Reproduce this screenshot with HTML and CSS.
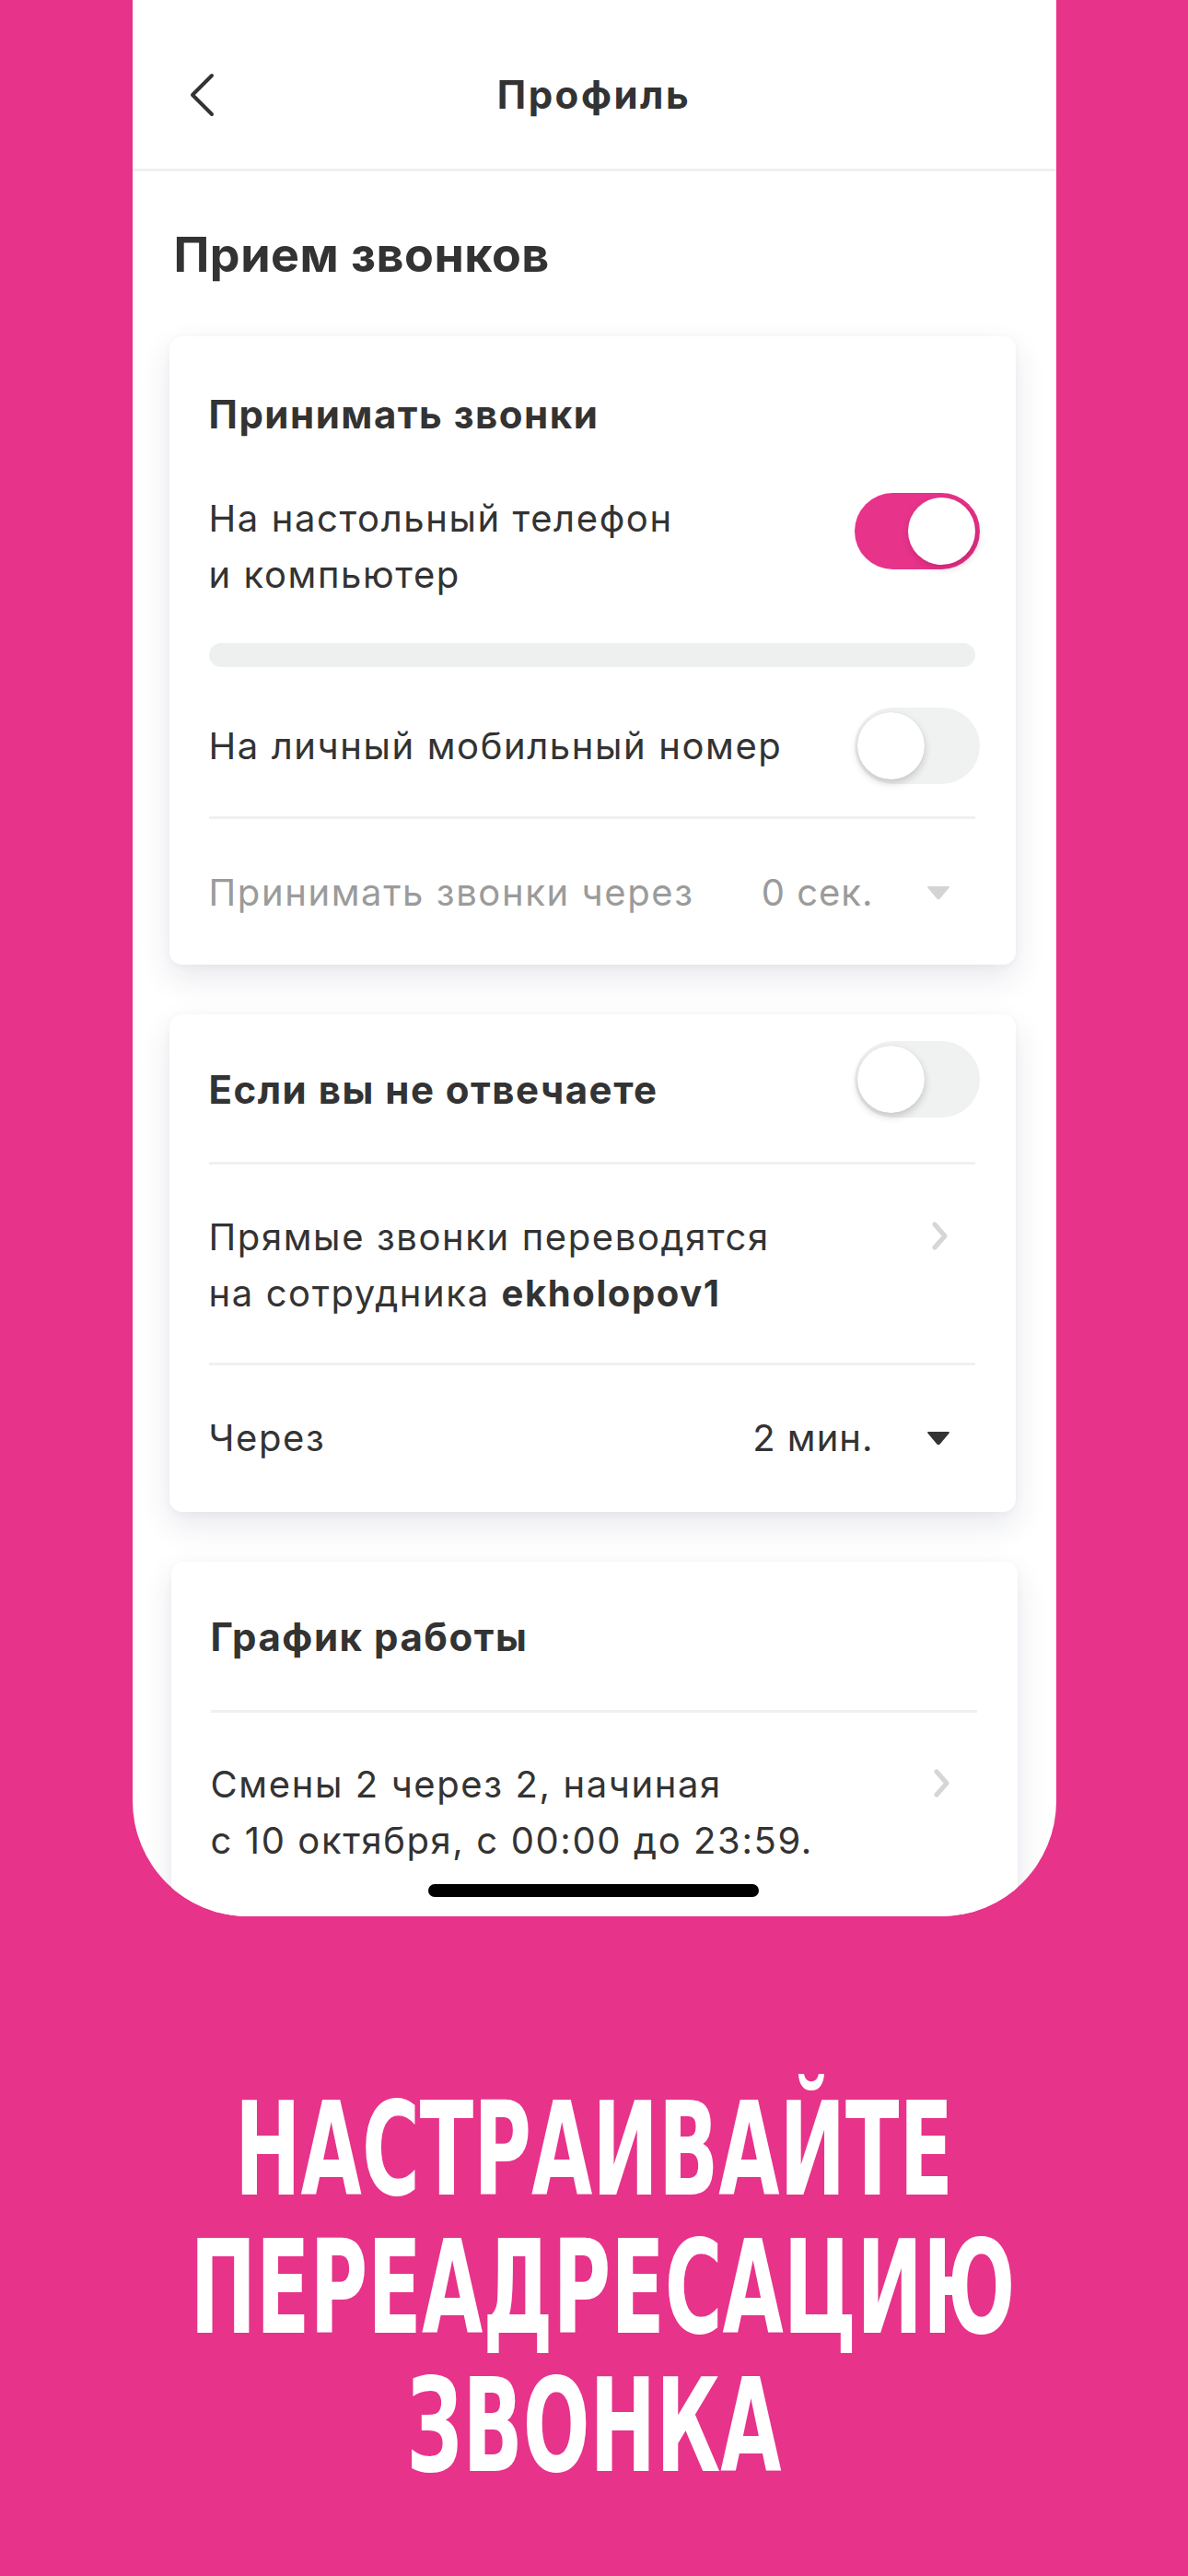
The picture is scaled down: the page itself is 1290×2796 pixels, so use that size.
FILE: index.html
```html
<!DOCTYPE html>
<html lang="ru">
<head>
    <meta charset="UTF-8">
    <meta name="viewport" content="width=device-width, initial-scale=1.0">
    <title>Профиль</title>
    <link rel="stylesheet" href="styles.css">
</head>
<body>
    <div class="screen">
        <!-- barra in alto -->
        <header class="topbar">
            <span class="back">
                <svg width="30" height="48" viewBox="0 0 30 48"><path d="M25 3 L4 24 L25 45" fill="none" stroke="#333" stroke-width="4" stroke-linecap="round" stroke-linejoin="round"/></svg>
            </span>
            <div class="topbar-title">Профиль</div>
            <span></span>
        </header>

        <main class="content">
            <h1 class="section-title">Прием звонков</h1>

            <section class="card">
                <div class="card-title">Принимать звонки</div>
                <div class="row row-top">
                    <div class="text">На настольный телефон<br>и компьютер</div>
                    <div class="toggle on"><span class="knob"></span></div>
                </div>
                <div class="bar"></div>
                <div class="row row-mobile">
                    <div class="text">На личный мобильный номер</div>
                    <div class="toggle"><span class="knob"></span></div>
                </div>
                <div class="divider divider-mobile"></div>
                <div class="row row-select row-delay disabled">
                    <div class="text">Принимать звонки через</div>
                    <div class="select">
                        <span class="value">0 сек.</span>
                        <svg class="caret" width="26" height="16" viewBox="0 0 26 16"><path d="M2.5 1 H23.5 Q26 1 24.3 3 L14.6 14.4 Q13 16 11.4 14.4 L1.7 3 Q0 1 2.5 1 Z" fill="#d4d4d4"/></svg>
                    </div>
                </div>
            </section>

            <section class="card">
                <div class="row row-noanswer">
                    <div class="card-title">Если вы не отвечаете</div>
                    <div class="toggle"><span class="knob"></span></div>
                </div>
                <div class="divider"></div>
                <div class="row row-link row-forward">
                    <div class="text">Прямые звонки переводятся<br>на сотрудника <b>ekholopov1</b></div>
                    <svg class="chevron" width="17" height="31" viewBox="0 0 17 31"><path d="M3 3 L14 15.5 L3 28" fill="none" stroke="#d6d6d6" stroke-width="5" stroke-linecap="round" stroke-linejoin="round"/></svg>
                </div>
                <div class="divider"></div>
                <div class="row row-select row-after">
                    <div class="text">Через</div>
                    <div class="select">
                        <span class="value">2 мин.</span>
                        <svg class="caret" width="26" height="16" viewBox="0 0 26 16"><path d="M2.5 1 H23.5 Q26 1 24.3 3 L14.6 14.4 Q13 16 11.4 14.4 L1.7 3 Q0 1 2.5 1 Z" fill="#333"/></svg>
                    </div>
                </div>
            </section>

            <section class="card card-schedule">
                <div class="card-title">График работы</div>
                <div class="divider divider-schedule"></div>
                <div class="row row-link row-schedule">
                    <div class="text">Смены 2 через 2, начиная<br>с 10 октября, с 00:00 до 23:59.</div>
                    <svg class="chevron" width="17" height="31" viewBox="0 0 17 31"><path d="M3 3 L14 15.5 L3 28" fill="none" stroke="#d6d6d6" stroke-width="5" stroke-linecap="round" stroke-linejoin="round"/></svg>
                </div>
            </section>
        </main>

        <div class="home-indicator"></div>
    </div>

    <div class="promo">
        <div class="promo-line">НАСТРАИВАЙТЕ</div>
        <div class="promo-line">ПЕРЕАДРЕСАЦИЮ</div>
        <div class="promo-line">ЗВОНКА</div>
    </div>
</body>
</html>
```

FILE: styles.css
```css
*{
    box-sizing: border-box;
}
body{
    margin: 0;
    background-color: #e7338a;
    font-family: Inter, "Noto Sans", sans-serif;
    color: #333;
}

.screen{
    position: relative;
    width: 1003px;
    height: 2080px;
    margin: 0 auto;
    background-color: white;
    border-radius: 0 0 125px 125px;
    overflow: hidden;
}

/* barra in alto */
.topbar{
    height: 186px;
    padding: 23px 61px 0 61px;
    border-bottom: 3px solid #f0f0f0;
    display: grid;
    grid-template-columns: 1fr auto 1fr;
    align-items: center;
}
.back svg{
    display: block;
}
.topbar-title{
    font-size: 42px;
    font-weight: 700;
    line-height: 50px;
    letter-spacing: 2.5px;
}

.content{
    padding: 0 44px 0 40px;
}
.section-title{
    margin: 60px 0 0 5px;
    font-size: 52px;
    font-weight: 700;
    line-height: 62px;
    letter-spacing: 0.5px;
}

.card{
    margin-top: 57px;
    padding: 0 44px 0 43px;
    background-color: white;
    border-radius: 14px;
    box-shadow: 0 14px 34px rgba(40, 50, 80, 0.11), 0 2px 8px rgba(40, 50, 80, 0.04);
}
.card + .card{
    margin-top: 54px;
}
.card-schedule{
    margin-left: 2px;
    margin-right: -2px;
}
.card-title{
    font-size: 42px;
    font-weight: 700;
    line-height: 50px;
    letter-spacing: 1.5px;
    padding-top: 60px;
}
.card-schedule .card-title{
    padding-top: 57px;
}

.row{
    display: flex;
    justify-content: space-between;
    align-items: flex-start;
}
.text{
    font-size: 40px;
    line-height: 61px;
    letter-spacing: 1.6px;
}
.text b{
    font-weight: 700;
}

.row-top{
    margin-top: 57px;
}
.row-top .toggle{
    margin-top: 3px;
}
.bar{
    height: 26px;
    margin-top: 44px;
    background-color: #eef0ef;
    border-radius: 13px;
}
.row-mobile{
    margin-top: 44px;
    align-items: center;
}
.divider{
    height: 3px;
    background-color: #f0f0f0;
}
.divider-mobile{
    margin-top: 35px;
}
.divider-schedule{
    margin-top: 54px;
}

.row-select{
    align-items: center;
}
.row-select .text{
    line-height: 50px;
}
.row-delay{
    margin-top: 55px;
    padding-bottom: 53px;
}
.disabled .text,
.disabled .value{
    color: #9b9b9b;
}
.select{
    display: flex;
    align-items: center;
    gap: 57px;
    margin-right: 27px;
}
.value{
    font-size: 40px;
    line-height: 50px;
    letter-spacing: 1px;
}
.caret{
    display: block;
}

.row-noanswer{
    padding: 29px 0 48px 0;
}
.row-noanswer .card-title{
    padding-top: 0;
    margin-top: 28px;
}
.row-forward{
    padding: 48px 0 45px 0;
}
.row-after{
    padding: 54px 0 55px 0;
}
.row-schedule{
    padding: 47px 0 60px 0;
}
.chevron{
    display: block;
    margin: 14px 30px 0 0;
}

/* interruttori */
.toggle{
    position: relative;
    flex-shrink: 0;
    width: 136px;
    height: 83px;
    margin-right: -5px;
    border-radius: 42px;
    background-color: #f0f1f1;
}
.toggle .knob{
    position: absolute;
    top: 5px;
    left: 3px;
    width: 73px;
    height: 73px;
    border-radius: 50%;
    background-color: white;
    box-shadow: 0 4px 9px rgba(0, 0, 0, 0.18), 0 0 1px rgba(0, 0, 0, 0.12);
}
.toggle.on{
    background-color: #e7338a;
}
.toggle.on .knob{
    left: auto;
    right: 5px;
    box-shadow: 2px 3px 8px rgba(120, 0, 50, 0.3);
}

.home-indicator{
    position: absolute;
    left: 50%;
    bottom: 21px;
    width: 359px;
    height: 14px;
    margin-left: -180px;
    border-radius: 7px;
    background-color: black;
}

/* scritta grande in basso */
.promo{
    padding-top: 179px;
    text-align: center;
    color: white;
    font-family: "DejaVu Sans Condensed", "DejaVu Sans", sans-serif;
    font-weight: 700;
    font-size: 140px;
    line-height: 150px;
}
.promo-line{
    transform: scaleX(0.68);
}
```
